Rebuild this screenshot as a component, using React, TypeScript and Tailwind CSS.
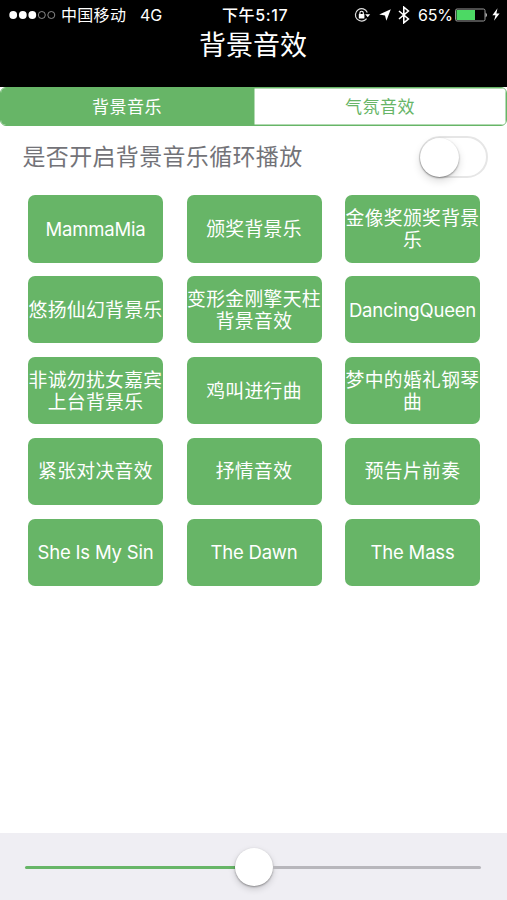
import { useState } from "react";

interface Sound {
  lines: string[];
  latin?: boolean;
}

const sounds: Sound[] = [
  { lines: ["MammaMia"], latin: true },
  { lines: ["颁奖背景乐"] },
  { lines: ["金像奖颁奖背景", "乐"] },
  { lines: ["悠扬仙幻背景乐"] },
  { lines: ["变形金刚擎天柱", "背景音效"] },
  { lines: ["DancingQueen"], latin: true },
  { lines: ["非诚勿扰女嘉宾", "上台背景乐"] },
  { lines: ["鸡叫进行曲"] },
  { lines: ["梦中的婚礼钢琴", "曲"] },
  { lines: ["紧张对决音效"] },
  { lines: ["抒情音效"] },
  { lines: ["预告片前奏"] },
  { lines: ["She Is My Sin"], latin: true },
  { lines: ["The Dawn"], latin: true },
  { lines: ["The Mass"], latin: true },
];

function StatusBar() {
  return (
    <div className="flex h-[29px] items-center whitespace-nowrap pl-[9px] text-[16px] leading-[29px]">
      <svg width="47" height="10" viewBox="0 0 47 10" className="shrink-0">
        <circle cx="4.2" cy="5" r="3.9" fill="#fff" />
        <circle cx="13.8" cy="5" r="3.9" fill="#fff" />
        <circle cx="23.3" cy="5" r="3.9" fill="#fff" />
        <circle cx="32.8" cy="5" r="3.5" fill="none" stroke="#aaa" strokeWidth="0.8" />
        <circle cx="42.3" cy="5" r="3.5" fill="none" stroke="#aaa" strokeWidth="0.8" />
      </svg>
      <span className="ml-[5px] w-[79px] pt-px tracking-[0.3px]">中国移动</span>
      <span className="w-[82px] pt-px">4G</span>
      <span className="w-[132px] pt-px font-medium tracking-[0.6px]">下午5:17</span>
      <svg width="17" height="16" viewBox="0 0 17 16" fill="none" className="shrink-0">
        <path d="M12.6 11.6A6.2 6.2 0 1 1 13.3 5.4" stroke="#ddd" strokeWidth="1.2" />
        <path d="M11.2 7.2h5L13.7 10.2z" fill="#fff" />
        <rect x="4.8" y="7.1" width="5.6" height="4.3" rx="0.5" fill="#fff" />
        <path d="M5.9 7.3V5.9a1.7 1.7 0 0 1 3.4 0v1.4" stroke="#fff" strokeWidth="1.1" />
      </svg>
      <svg width="12" height="12" viewBox="0 0 12 12" className="ml-[8px] shrink-0">
        <path d="M11.8 0.2 7.4 11.8 6 6.4 0.2 5.6z" fill="#fff" />
      </svg>
      <svg width="12" height="18" viewBox="0 0 12 18" fill="none" className="ml-[7px] shrink-0">
        <path d="M1 5 10.4 13 5.8 16.8V1.2L10.4 5 1 13" stroke="#fff" strokeWidth="1.6" />
      </svg>
      <span className="ml-[8px] w-[37px] pt-px text-[16px] tracking-[-0.2px]">65%</span>
      <svg width="33" height="14" viewBox="0 0 33 14" className="shrink-0">
        <rect x="0.5" y="1" width="29.5" height="12" rx="1.6" fill="none" stroke="#aaa" strokeWidth="0.9" />
        <rect x="1.5" y="2" width="18.5" height="10" fill="#4cd964" />
        <path d="M30.6 4.4q2.6 2.6 0 5.2z" fill="#ddd" />
      </svg>
      <svg width="8" height="13" viewBox="0 0 8 13" className="ml-[4px] shrink-0">
        <path d="M5.5 0.3 0.4 7.3H3.5L2 12.7 7.6 5.4H4.4z" fill="#fff" />
      </svg>
    </div>
  );
}

export default function App() {
  const [tab, setTab] = useState(0);
  const [loop, setLoop] = useState(false);

  return (
    <div className="flex h-[900px] w-[507px] flex-col overflow-hidden bg-white font-['Inter','Noto_Sans_CJK_SC',sans-serif]">
      <header className="h-[87px] shrink-0 bg-black text-white">
        <StatusBar />
        <h1 className="pr-px pt-[2px] text-center text-[27px] font-normal leading-[30px]">背景音效</h1>
      </header>

      <div className="flex h-[39px] shrink-0 overflow-hidden rounded-[6px] border border-[#67b567] text-[17px] tracking-[0.55px]">
        {["背景音乐", "气氛音效"].map((nome, i) => (
          <button
            key={nome}
            onClick={() => setTab(i)}
            className={
              tab === i
                ? "flex-1 bg-[#67b567] pr-px pt-[2px] text-white"
                : "flex-1 bg-white pt-[2px] text-[#67b567] shadow-[inset_0_0_0_0.5px_#67b567]"
            }
          >
            {nome}
          </button>
        ))}
      </div>

      <div className="flex h-[69px] shrink-0 items-start justify-between pl-[22.5px] pr-[19px] pt-[9px]">
        <span className="text-[23px] leading-[44px] tracking-[0.33px] text-[#737378]">是否开启背景音乐循环播放</span>
        <button
          onClick={() => setLoop(!loop)}
          className={
            loop
              ? "mt-px flex h-[42px] w-[69px] items-center justify-end rounded-full border-2 border-[#67b567] bg-[#67b567]"
              : "mt-px flex h-[42px] w-[69px] items-center rounded-full border-2 border-[#e6e6e6] bg-white"
          }
        >
          <span className="-ml-px h-[39px] w-[39px] shrink-0 rounded-full bg-white shadow-[0_4px_8px_rgba(0,0,0,0.14),0_1px_2px_rgba(0,0,0,0.4)]" />
        </button>
      </div>

      <main className="grid grid-cols-[135px_135px_135px] gap-x-[23.5px] gap-y-[13.4px] pl-[28px]">
        {sounds.map((s) => (
          <button
            key={s.lines[0]}
            className="flex h-[67.5px] flex-col items-center justify-center whitespace-nowrap rounded-[7px] bg-[#67b567] pt-[2px] text-[18.8px] leading-[22px] text-white"
          >
            {s.lines.map((l) => (
              <span key={l} className={s.latin ? "pb-[2px] text-[18.5px] tracking-[-0.2px]" : "tracking-[0.35px]"}>
                {l}
              </span>
            ))}
          </button>
        ))}
      </main>

      <footer className="mt-auto flex h-[67px] shrink-0 items-center bg-[#efeef3] pl-[25px] pr-[26px]">
        <div className="mt-[2px] h-[3px] w-[210px] rounded-l-full bg-[#67b567]" />
        <div className="h-[38px] w-[38px] rounded-full bg-white shadow-[0_3px_7px_rgba(0,0,0,0.16),0_1px_2px_rgba(0,0,0,0.35)]" />
        <div className="mt-[2px] h-[3px] flex-1 rounded-r-full bg-[#b7b6bb]" />
      </footer>
    </div>
  );
}
